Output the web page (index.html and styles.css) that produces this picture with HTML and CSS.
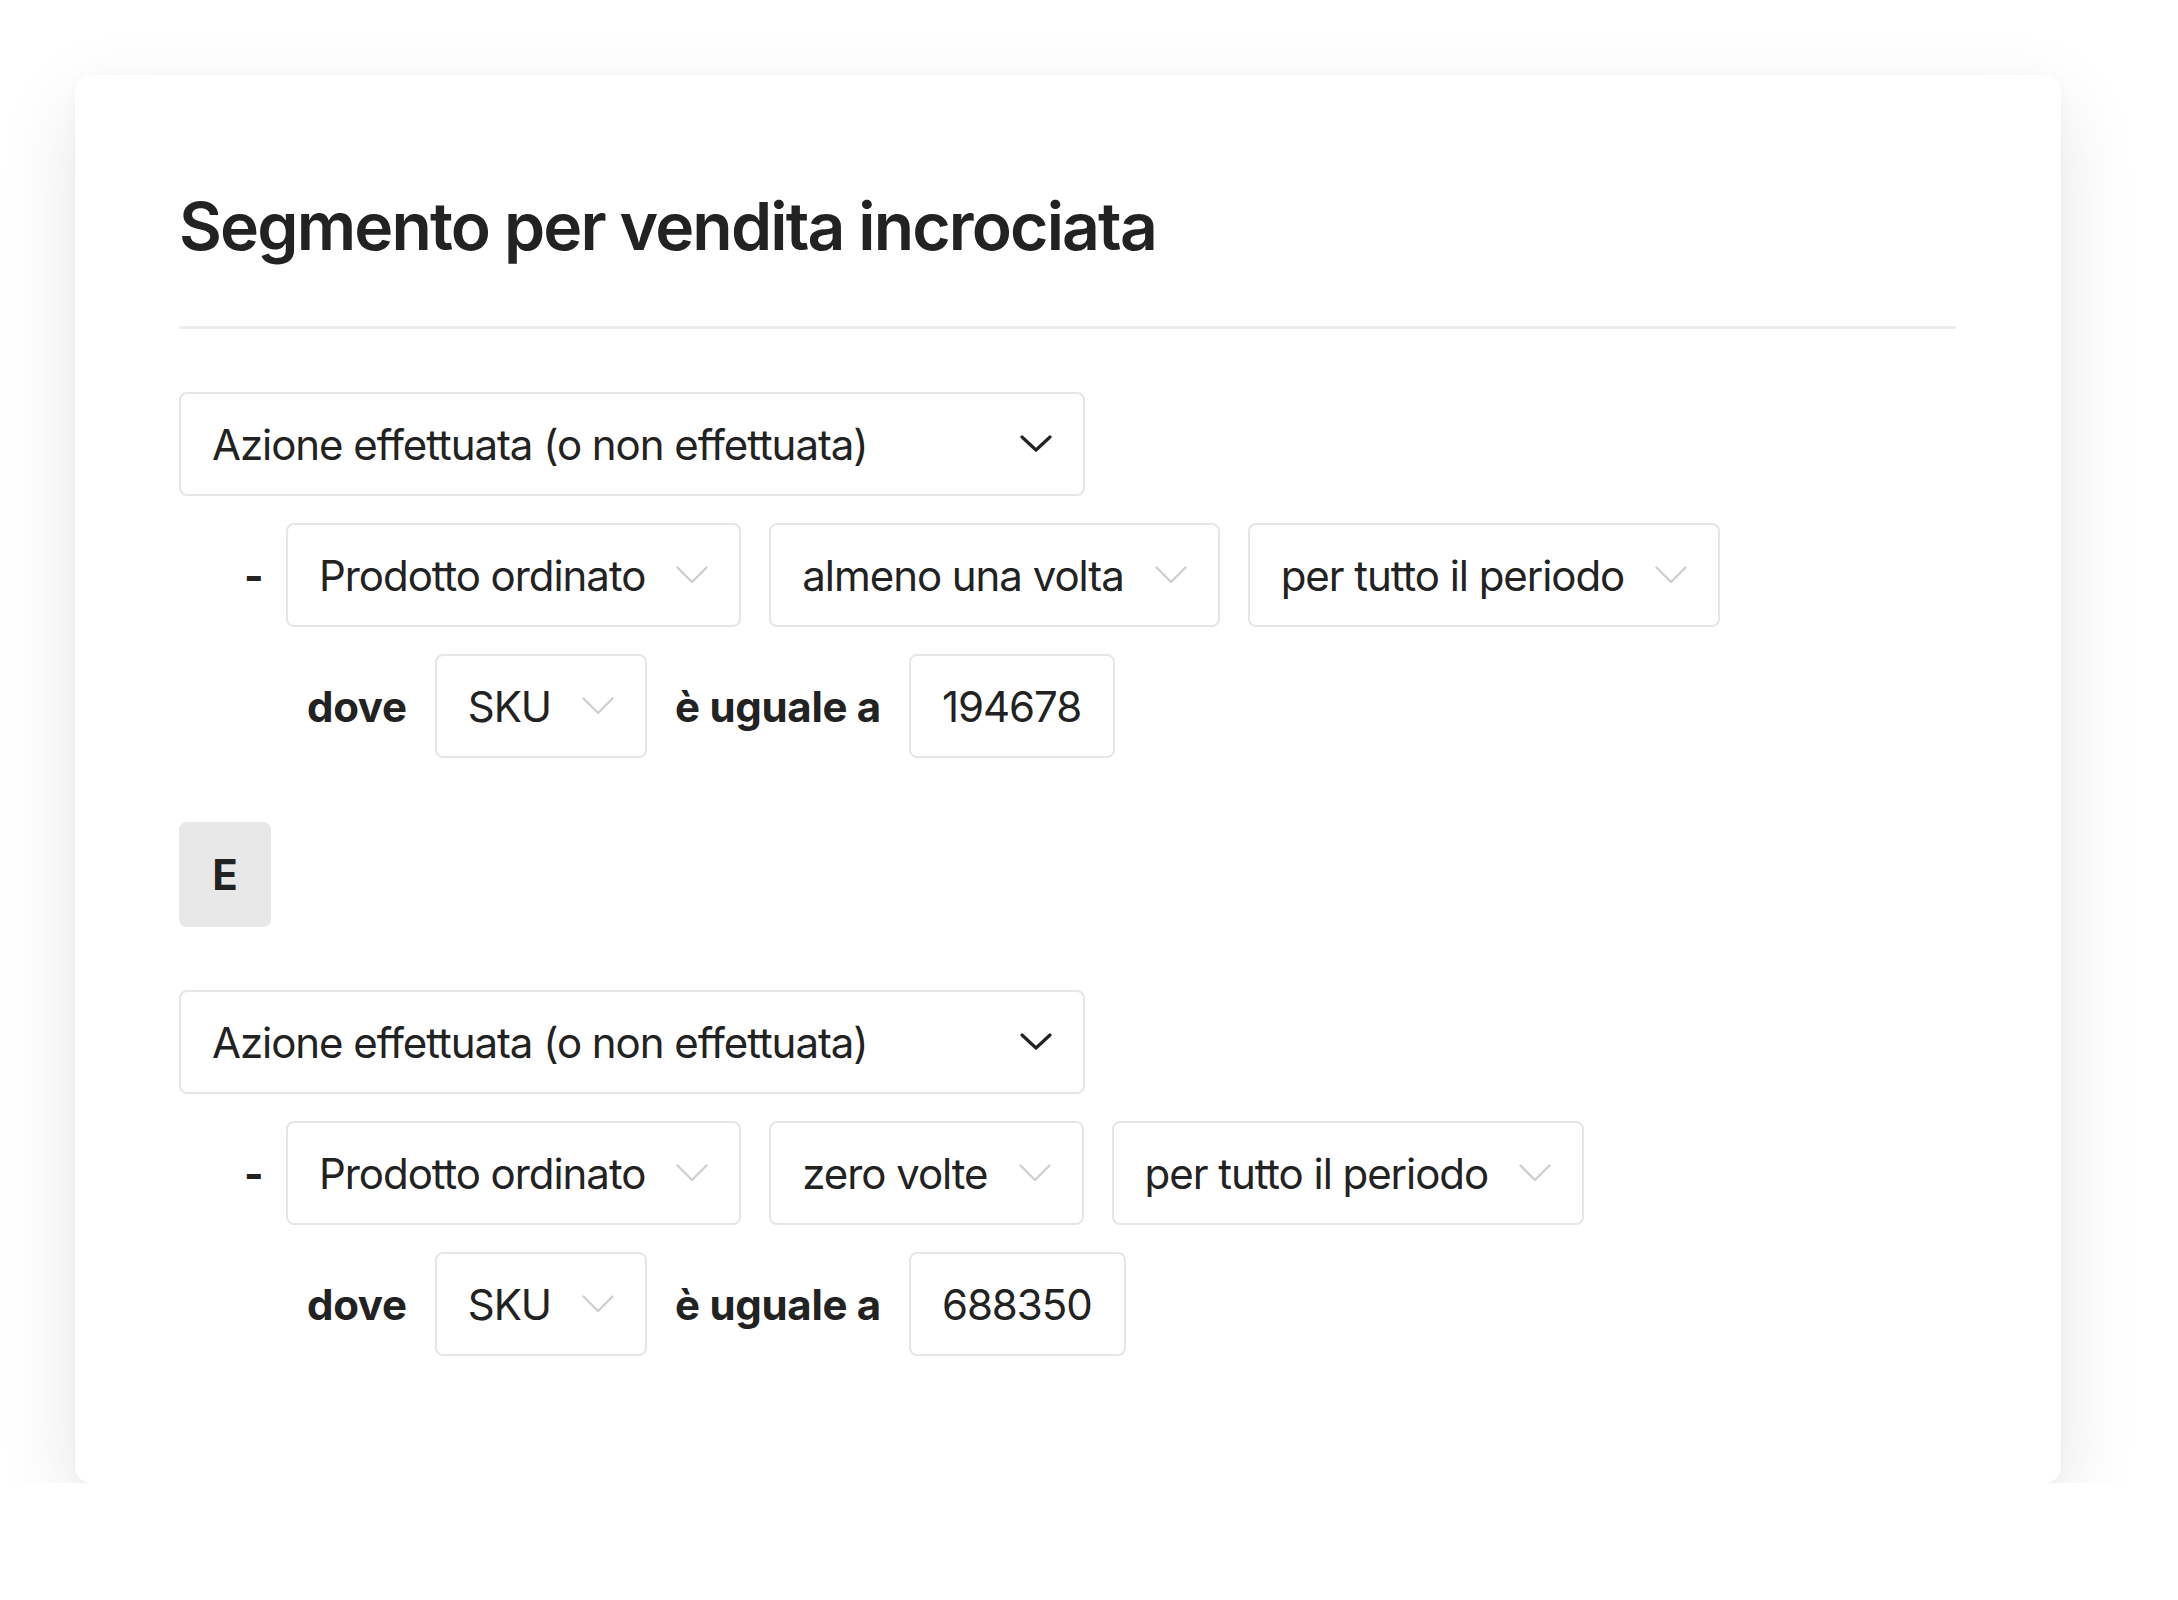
FILE: index.html
```html
<!DOCTYPE html>
<html lang="it">
<head>
<meta charset="utf-8">
<title>Segmento per vendita incrociata</title>
<link rel="stylesheet" href="styles.css">
</head>
<body>
<div class="card">
  <h1 class="title">Segmento per vendita incrociata</h1>
  <div class="divider"></div>

  <div class="block">
    <div class="select select-main">
      <span class="select-text">Azione effettuata (o non effettuata)</span>
      <svg class="chev chev-dark" viewBox="0 0 32 18"><path d="M2 2 L16 15 L30 2"/></svg>
    </div>
    <div class="row row-cond">
      <span class="dash">-</span>
      <div class="select"><span class="select-text">Prodotto ordinato</span><svg class="chev chev-light" viewBox="0 0 32 18"><path d="M1.5 1.5 L16 16 L30.5 1.5"/></svg></div>
      <div class="select"><span class="select-text">almeno una volta</span><svg class="chev chev-light" viewBox="0 0 32 18"><path d="M1.5 1.5 L16 16 L30.5 1.5"/></svg></div>
      <div class="select"><span class="select-text">per tutto il periodo</span><svg class="chev chev-light" viewBox="0 0 32 18"><path d="M1.5 1.5 L16 16 L30.5 1.5"/></svg></div>
    </div>
    <div class="row row-where">
      <span class="label">dove</span>
      <div class="select"><span class="select-text">SKU</span><svg class="chev chev-light" viewBox="0 0 32 18"><path d="M1.5 1.5 L16 16 L30.5 1.5"/></svg></div>
      <span class="label">è uguale a</span>
      <div class="input">194678</div>
    </div>
  </div>

  <div class="and">E</div>

  <div class="block">
    <div class="select select-main">
      <span class="select-text">Azione effettuata (o non effettuata)</span>
      <svg class="chev chev-dark" viewBox="0 0 32 18"><path d="M2 2 L16 15 L30 2"/></svg>
    </div>
    <div class="row row-cond">
      <span class="dash">-</span>
      <div class="select"><span class="select-text">Prodotto ordinato</span><svg class="chev chev-light" viewBox="0 0 32 18"><path d="M1.5 1.5 L16 16 L30.5 1.5"/></svg></div>
      <div class="select"><span class="select-text">zero volte</span><svg class="chev chev-light" viewBox="0 0 32 18"><path d="M1.5 1.5 L16 16 L30.5 1.5"/></svg></div>
      <div class="select"><span class="select-text">per tutto il periodo</span><svg class="chev chev-light" viewBox="0 0 32 18"><path d="M1.5 1.5 L16 16 L30.5 1.5"/></svg></div>
    </div>
    <div class="row row-where">
      <span class="label">dove</span>
      <div class="select"><span class="select-text">SKU</span><svg class="chev chev-light" viewBox="0 0 32 18"><path d="M1.5 1.5 L16 16 L30.5 1.5"/></svg></div>
      <span class="label">è uguale a</span>
      <div class="input">688350</div>
    </div>
  </div>
</div>
</body>
</html>
```

FILE: styles.css
```css
* { box-sizing: border-box; }

html, body {
  margin: 0;
  padding: 0;
  background: #ffffff;
}

body {
  font-family: Inter, "Liberation Sans", sans-serif;
  color: #222222;
  padding: 75px 0 0 75px;
}

.card {
  width: 1986px;
  height: 1408px;
  background: #ffffff;
  border-radius: 16px;
  box-shadow: 0 28px 80px rgba(0, 0, 0, 0.10), 0 2px 12px rgba(0, 0, 0, 0.03);
  padding: 118px 104px 0 104px;
  display: flex;
  flex-direction: column;
  align-items: flex-start;
}

.title {
  margin: 0;
  font-size: 66px;
  line-height: 66px;
  font-weight: 600;
  letter-spacing: -1.85px;
  color: #222222;
}

.divider {
  width: 1777px;
  height: 3px;
  background: #ececec;
  margin-top: 67px;
  margin-bottom: 63px;
}

.block {
  display: flex;
  flex-direction: column;
  gap: 27px;
}

.row {
  display: flex;
  align-items: center;
  gap: 28px;
}

.row-cond {
  padding-left: 65px;
}

.row-where {
  padding-left: 128px;
}

.select,
.input {
  height: 104px;
  border: 2px solid #e6e6e6;
  border-radius: 8px;
  background: #ffffff;
  display: flex;
  align-items: center;
  font-size: 42px;
  font-weight: 400;
  letter-spacing: -1.05px;
  color: #222222;
  white-space: nowrap;
}

.select {
  padding: 0 31px 0 31px;
  gap: 31px;
}

.select-main {
  width: 906px;
  justify-content: space-between;
}

.input {
  padding: 0 32px 0 31px;
}

.chev {
  fill: none;
  stroke-linecap: round;
  stroke-linejoin: round;
  flex: none;
}

.chev-dark {
  width: 32px;
  height: 18px;
  stroke: #222222;
  stroke-width: 3.2;
}

.chev-light {
  width: 32px;
  height: 18px;
  stroke: #cfcfcf;
  stroke-width: 2.4;
}

.dash {
  width: 14px;
  font-size: 42px;
  font-weight: 700;
  text-align: center;
}

.label {
  font-size: 42px;
  font-weight: 700;
  letter-spacing: -0.3px;
  color: #222222;
}

.and {
  margin: 64px 0 63px 0;
  width: 92px;
  height: 105px;
  border-radius: 8px;
  background: #e8e8e8;
  display: flex;
  align-items: center;
  justify-content: center;
  font-size: 42px;
  font-weight: 700;
  color: #222222;
}
```
